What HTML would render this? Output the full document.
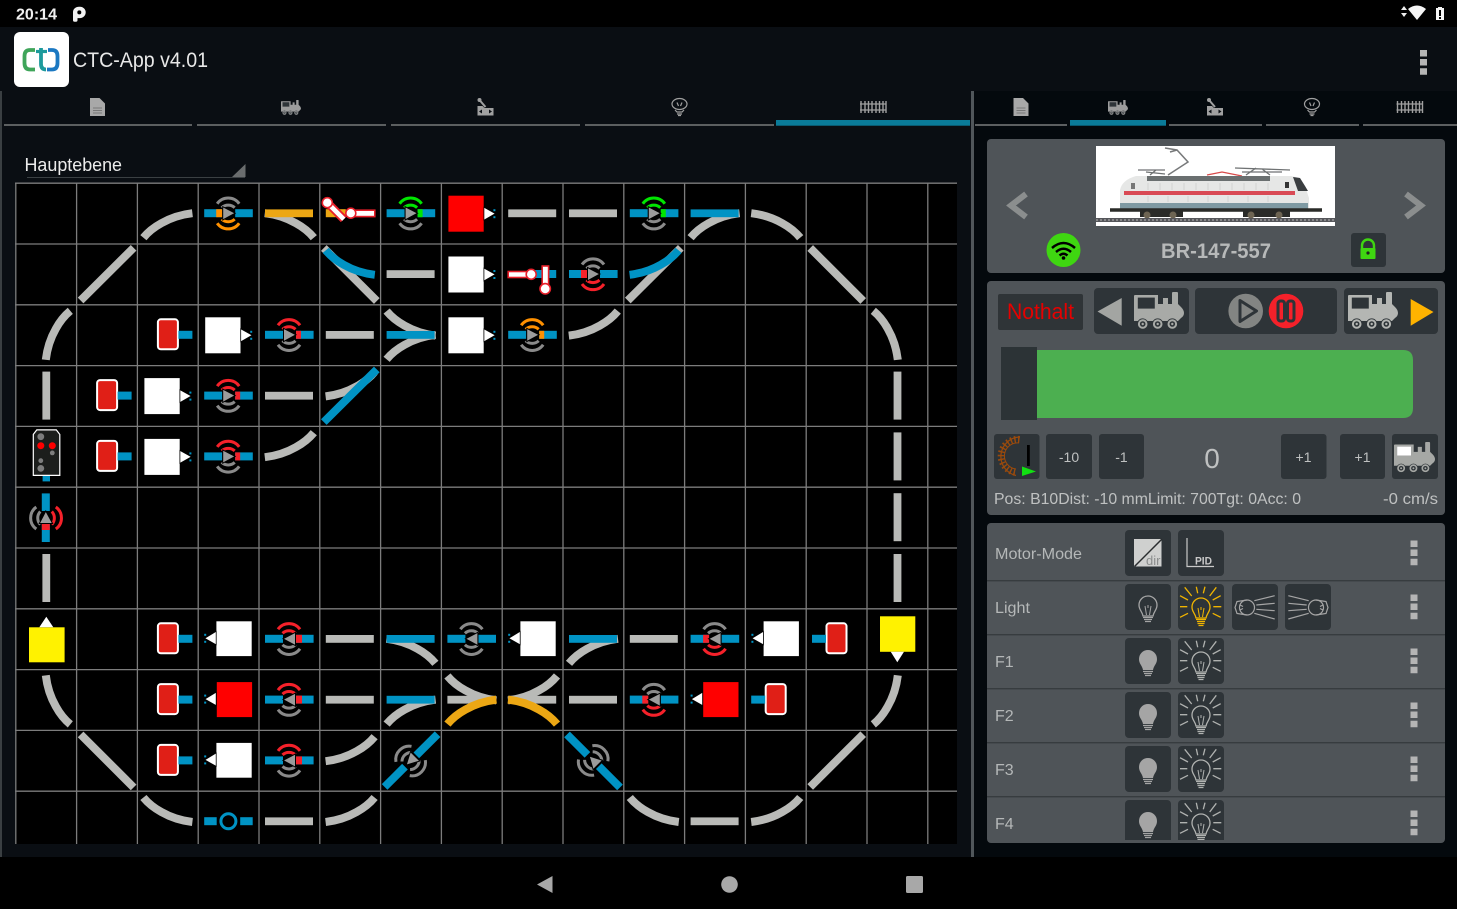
<!DOCTYPE html>
<html><head><meta charset="utf-8"><title>CTC-App</title>
<style>
html,body{margin:0;padding:0;background:#0a0e13;width:1457px;height:909px;overflow:hidden}
svg{display:block;position:absolute;left:0;top:0}
text{font-family:"Liberation Sans",sans-serif}
</style></head><body>
<svg width="1457" height="909" viewBox="0 0 1457 909" xmlns="http://www.w3.org/2000/svg">
<defs>
<!-- tracks -->
<rect id="h" x="6" y="26.2" width="48" height="7.8" fill="currentColor"/>
<rect id="v" x="26.6" y="6" width="7.8" height="48" fill="currentColor"/>
<path id="cES" d="M55 30Q38 32 24 40Q13 46 6 54.5" fill="none" stroke="currentColor" stroke-width="8"/>
<use id="cWS" href="#cES" transform="matrix(-1 0 0 1 60.8 0)"/>
<use id="cEN" href="#cES" transform="matrix(1 0 0 -1 0 60.8)"/>
<use id="cWN" href="#cES" transform="matrix(-1 0 0 -1 60.8 60.8)"/>
<use id="cSNE" href="#cES" transform="matrix(0 1 1 0 0 0)"/>
<use id="cSNW" href="#cES" transform="matrix(0 1 -1 0 60.8 0)"/>
<use id="cNSE" href="#cES" transform="matrix(0 -1 1 0 0 60.8)"/>
<use id="cNSW" href="#cES" transform="matrix(0 -1 -1 0 60.8 60.8)"/>
<path id="dU" d="M4 56.5L57 3.8" fill="none" stroke="currentColor" stroke-width="8"/>
<path id="dD" d="M4 4L57 57" fill="none" stroke="currentColor" stroke-width="8"/>
<!-- sensor parts -->
<g id="bl" fill="#0093c4"><rect x="6" y="26" width="18" height="8"/><rect x="37" y="26" width="17.6" height="8"/></g>
<polygon id="tR" points="24.5,23.5 37,30 24.5,36.8" fill="#9c9c9c" stroke="#000" stroke-width="1"/>
<polygon id="tL" points="36.5,23.5 24,30 36.5,36.8" fill="#9c9c9c" stroke="#000" stroke-width="1"/>
<g id="at" fill="none" stroke="currentColor" stroke-width="3"><path d="M19 20.5A13.500 13.500 0 0 1 41 20.5"/><path d="M23.500 24.500A9.500 9.500 0 0 1 36.500 24.500"/></g>
<g id="ab" fill="none" stroke="currentColor" stroke-width="3"><path d="M19 40A13.500 13.500 0 0 0 41 40"/><path d="M23.500 36A9.500 9.500 0 0 0 36.500 36"/></g>
<!-- composite sensors -->
<g id="sRedR"><use href="#at" color="#f5212a"/><use href="#ab" color="#8a8a8a"/><use href="#bl"/><rect x="37" y="26" width="5" height="8" fill="#f5212a"/><use href="#tR"/></g>
<g id="sOrgL"><use href="#at" color="#8a8a8a"/><use href="#ab" color="#ff9000"/><use href="#bl"/><rect x="18" y="26" width="6" height="8" fill="#ff9000"/><use href="#tR"/></g>
<g id="sOrgR"><use href="#at" color="#ff9000"/><use href="#ab" color="#8a8a8a"/><use href="#bl"/><rect x="37" y="26" width="5" height="8" fill="#ff9000"/><use href="#tR"/></g>
<g id="sGrn"><use href="#at" color="#00e600"/><use href="#ab" color="#8a8a8a"/><use href="#bl"/><rect x="37" y="26" width="5" height="8" fill="#00e600"/><use href="#tR"/></g>
<g id="sRedB"><use href="#at" color="#8a8a8a"/><use href="#ab" color="#f5212a"/><use href="#bl"/><rect x="18" y="26" width="6" height="8" fill="#f5212a"/><use href="#tR"/></g>
<g id="lRedR"><use href="#at" color="#f5212a"/><use href="#ab" color="#8a8a8a"/><use href="#bl"/><rect x="37" y="26" width="6" height="8" fill="#f5212a"/><use href="#tL"/></g>
<g id="lRedB"><use href="#at" color="#8a8a8a"/><use href="#ab" color="#f5212a"/><use href="#bl"/><rect x="18.5" y="26" width="6" height="8" fill="#f5212a"/><use href="#tL"/></g>
<g id="lGray"><use href="#at" color="#8a8a8a"/><use href="#ab" color="#8a8a8a"/><use href="#bl"/><use href="#tL"/></g>
<!-- markers & blocks -->
<g id="mk"><rect x="20.5" y="14.5" width="20" height="30" rx="3" fill="#e01f17" stroke="#fff" stroke-width="2"/><rect x="41" y="26" width="14" height="8" fill="#0093c4"/></g>
<use id="mkL" href="#mk" transform="matrix(-1 0 0 1 60.8 0)"/>
<g id="arrR"><rect x="52" y="26" width="2" height="2" fill="#0093c4"/><rect x="52" y="33" width="2" height="2" fill="#0093c4"/><polygon points="42.5,24 54,30.4 42.5,37" fill="#fff" stroke="#000" stroke-width=".8"/></g>
<g id="arrL"><rect x="6" y="25" width="2" height="2" fill="#0093c4"/><rect x="6" y="32" width="2" height="2" fill="#0093c4"/><polygon points="18,22.5 6.5,29.5 18,36" fill="#fff" stroke="#000" stroke-width=".8"/></g>
<g id="bWR"><rect x="7" y="12.5" width="35.3" height="36" fill="#fff"/><use href="#arrR"/></g>
<g id="bRR"><rect x="7" y="12.5" width="35.3" height="36" fill="#f00"/><use href="#arrR"/></g>
<g id="bWL"><rect x="18.2" y="12.5" width="35.3" height="34.8" fill="#fff"/><use href="#arrL"/></g>
<g id="bRL"><rect x="18.6" y="12.5" width="35.3" height="35" fill="#f00"/><use href="#arrL"/></g>
<!-- loco -->
<g id="loco"><path fill="currentColor" d="M0 4Q0 3 1 3H24V12H29V6H34V12H38V1Q38 0 39 0H43Q44 0 44 1V12L47 15Q50 18 50 21Q50 24 47 26L44 29H0Z"/><rect x="3.800" y="5.600" width="17" height="11" fill="#2e3438"/><g fill="currentColor" stroke="#2e3438" stroke-width=".8"><circle cx="8.700" cy="32" r="5.200"/><circle cx="23.700" cy="32" r="5.200"/><circle cx="38.300" cy="32" r="5.200"/></g><g fill="#2e3438"><circle cx="8.700" cy="32" r="2.800"/><circle cx="23.700" cy="32" r="2.800"/><circle cx="38.300" cy="32" r="2.800"/></g><g fill="currentColor"><circle cx="8.700" cy="32" r="1.200"/><circle cx="23.700" cy="32" r="1.200"/><circle cx="38.300" cy="32" r="1.200"/></g></g>
<g id="docT"><path d="M-7.500 -9H2L7.500 -3.500V9H-7.500Z" fill="#a8a8a8"/><path d="M-4.500 1H4.500M-4.500 3.500H4.500M-4.500 6H4.500" stroke="#777" stroke-width="1"/></g>
<g id="levT"><path d="M-8 -1H-3L-1 1H8V8.500H-8Z" fill="#a0a0a0"/><path d="M-6 -7L0 0" stroke="#a0a0a0" stroke-width="2"/><circle cx="-6" cy="-7" r="2" fill="#a0a0a0"/><path d="M-6.500 4.500L-3.500 2.500V6.500ZM6.500 4.500L3.500 2.500V6.500Z" fill="#0a0e13"/></g>
<g id="blbT" fill="none" stroke="#a0a0a0" stroke-width="1.200"><ellipse cx="0" cy="-3" rx="7.500" ry="5.500"/><path d="M-4.500 3L-2.500 5H2.500L4.500 3M-2.500 7H2.500M-1.500 8.500H1.500"/><path d="M-2.500 -4.500L-1 -1M2.500 -4.500L1 -1"/></g>
<g id="trkT" stroke="#a0a0a0" fill="none"><path d="M-13 -3H13M-13 3H13" stroke-width="1.200"/><path d="M-12 -6V6M-8 -6V6M-4.500 -6V6M-1 -6V6M3 -6V6M6.500 -6V6M10 -6V6M13 -6V6" stroke-width="1.400"/></g>
<!-- bulbs (button-local 46x46) -->
<g id="bulbO"><path d="M18 32C17 27 14 26 14 21A9 9 0 0 1 32 21C32 26 29 27 28 32Z" fill="none" stroke="#a5a5a5" stroke-width="1.300"/><path d="M20 22L21.500 31M26 22L24.500 31M23 21V24" stroke="#a5a5a5" stroke-width="1" fill="none"/><path d="M18 33.500H28M19 35.500H27M20 37.500H26" stroke="#a5a5a5" stroke-width="1.200"/></g>
<g id="bulbF"><path d="M18 32C17 27 14 26 14 21A9 9 0 0 1 32 21C32 26 29 27 28 32Z" fill="#a5a5a5"/><path d="M18 33.500H28M19 35.500H27M20 37.500H26" stroke="#a5a5a5" stroke-width="1.200"/></g>
<g id="bulbR" fill="none" stroke="currentColor"><path stroke-width="1.300" d="M18 34C17 29 14 28 14 23A9 9 0 0 1 32 23C32 28 29 29 28 34Z"/><path stroke-width="1" d="M20 24L21.500 33M26 24L24.500 33M23 23V26"/><path stroke-width="1.200" d="M18 35.500H28M19 37.500H27M19.500 39.500H26.500M20.500 41.500H25.500"/><path stroke-width="1.300" d="M6.700 3.300L13.700 12M18.300 2.700L19.700 9.300M27 2.700L25.300 9.300M38.300 3.300L31.700 12M2 11.700L10 16M42.700 11.700L34.700 16M2 22.700H9.300M43.300 22.700H35.300M2 33.300L10 29.300M42.700 33.300L34.700 29.300"/></g>
<g id="lamp" fill="none" stroke="#a5a5a5" stroke-width="1.200"><circle cx="15" cy="23.500" r="7.500"/><path d="M15 16L5 17.500L3 23.500L5 29.500L15 31M8 21L11 22.500M8 26L11 24.500M22.300 16.700L42.700 11.700M24.300 21L42.700 19.300M24.300 25.300L42.700 26.700M22.300 29.300L42.700 35"/></g>
<path id="dots" d="M0 0h7v6.500h-7zM0 9h7v6.500h-7zM0 18.300h7v6.500h-7z" fill="#b5b5b5"/>
<clipPath id="cardClip"><rect x="987" y="523" width="458" height="317"/></clipPath>
<clipPath id="imgClip"><rect x="1096" y="146" width="239" height="80"/></clipPath>
</defs>

<!-- backgrounds -->
<rect width="1457" height="909" fill="#0a0e13"/>
<rect x="974" y="91" width="483" height="766" fill="#04090d"/>
<rect x="0" y="0" width="1457" height="27" fill="#000"/>
<rect x="0" y="857" width="1457" height="52" fill="#000"/>
<rect x="0" y="91" width="2" height="766" fill="#3a3f42"/>
<rect x="971" y="91" width="3" height="766" fill="#50565a"/>

<!-- status bar -->
<text x="16" y="19.500" font-size="15.500" font-weight="bold" fill="#f0f0f0" textLength="41" lengthAdjust="spacingAndGlyphs">20:14</text>
<path d="M73 12a6 5.300 0 0 1 6-5.300h1a5.700 5.700 0 0 1 0 11.400h-2.500v2a1.600 1.600 0 0 1-1.600 1.600h-1.300a1.600 1.600 0 0 1-1.600-1.600Z" fill="#f2f2f2"/><circle cx="79.300" cy="12.400" r="2" fill="#000"/>
<path d="M1404 6l3 4h-6ZM1404 17l-3-4h6Z" fill="#eee"/>
<path d="M1408 9Q1417 2 1426 9L1417 20Z" fill="#f5f5f5"/>
<path d="M1436 8h2v-1h4v1h2v12h-8Z" fill="#f5f5f5"/><rect x="1439" y="10" width="2" height="6" fill="#000"/><rect x="1439" y="17" width="2" height="2" fill="#000"/>

<!-- toolbar -->
<rect x="14" y="32" width="55" height="55" rx="6" fill="#fff"/>
<path d="M35 50H30Q24.500 50 24.500 56V63Q24.500 69.500 30 69.500H35" fill="none" stroke="#3fa55a" stroke-width="3.800"/>
<path d="M41 48V64Q41 69.500 46 69.500" fill="none" stroke="#1d9a9c" stroke-width="3.800"/>
<path d="M36 51.500H47" stroke="#1d9a9c" stroke-width="3.200"/>
<path d="M48 50H52Q57.500 50 57.500 56V63Q57.500 69.500 52 69.500H47" fill="none" stroke="#1b78c2" stroke-width="3.800"/>
<text x="73" y="67" font-size="21.500" fill="#e8e8e8" textLength="135" lengthAdjust="spacingAndGlyphs">CTC-App v4.01</text>
<use href="#dots" transform="translate(1420 50)"/>

<!-- left tabs -->
<g fill="#5c5f60">
<rect x="4" y="124" width="188" height="2"/><rect x="197" y="124" width="189" height="2"/><rect x="391" y="124" width="189" height="2"/><rect x="585" y="124" width="189" height="2"/>
</g>
<rect x="776" y="120" width="194" height="5.700" fill="#0a7b99"/>
<use href="#docT" x="97.500" y="107"/><use href="#loco" transform="translate(281 100) scale(.4)" color="#9c9c9c"/><use href="#levT" x="485.500" y="107"/><use href="#blbT" x="679.500" y="107"/><use href="#trkT" x="873" y="107"/>
<!-- right tabs -->
<g fill="#5c5f60">
<rect x="975" y="124" width="92" height="2"/><rect x="1169" y="124" width="93" height="2"/><rect x="1266" y="124" width="93" height="2"/><rect x="1363" y="124" width="94" height="2"/>
</g>
<rect x="1070" y="120" width="96" height="5.700" fill="#0a7b99"/>
<use href="#docT" x="1021" y="107"/><use href="#loco" transform="translate(1108 100) scale(.4)" color="#9c9c9c"/><use href="#levT" x="1215" y="107"/><use href="#blbT" x="1312" y="107"/><use href="#trkT" x="1409.500" y="107"/>

<!-- dropdown -->
<text x="24.500" y="171" font-size="18" fill="#ececec" textLength="97.500" lengthAdjust="spacingAndGlyphs">Hauptebene</text>
<rect x="27" y="177" width="218" height="1" fill="#3b4043"/>
<polygon points="232,177 245.500,177 245.500,164" fill="#6a6d6e"/>

<!-- plan -->
<rect x="16" y="183" width="941" height="661" fill="#000"/>
<g stroke="#7c7c7c" stroke-width="1.300">
<path d="M15.800 183V844M76.600 183V844M137.400 183V844M198.200 183V844M259 183V844M319.800 183V844M380.600 183V844M441.400 183V844M502.200 183V844M563 183V844M623.800 183V844M684.600 183V844M745.400 183V844M806.200 183V844M867 183V844M927.800 183V844"/>
<path d="M15 183.200H957M15 244H957M15 304.800H957M15 365.600H957M15 426.400H957M15 487.200H957M15 548H957M15 608.800H957M15 669.600H957M15 730.400H957M15 791.200H957"/>
</g>
<g color="#b9bab7">
<!-- row 0 -->
<g transform="translate(0 183.200)">
<use href="#cES" x="0" transform="translate(137.400 0)"/>
<use href="#sOrgL" x="198.200"/>
<use href="#cWS" transform="translate(259 0)"/><use href="#h" x="259" color="#eca714"/>
<g transform="translate(319.800 0)"><rect x="6" y="26" width="20" height="8" fill="#eca714"/><path d="M8 20L24 36" stroke="#e8202a" stroke-width="8.400"/><path d="M8 20L24 36" stroke="#fff" stroke-width="4.600"/><circle cx="7.500" cy="19.500" r="5" fill="#fff" stroke="#e8202a" stroke-width="1.600"/><rect x="31" y="27" width="24" height="6.400" fill="#fff" stroke="#e8202a" stroke-width="1.600"/><circle cx="31" cy="30" r="5" fill="#fff" stroke="#e8202a" stroke-width="1.600"/></g>
<use href="#sGrn" x="380.600"/>
<use href="#bRR" x="441.400"/>
<use href="#h" x="502.200"/><use href="#h" x="563"/>
<use href="#sGrn" x="623.800"/>
<use href="#cES" transform="translate(684.600 0)"/><use href="#h" x="684.600" color="#0093c4"/>
<use href="#cWS" transform="translate(745.400 0)"/>
</g>
<!-- row 1 -->
<g transform="translate(0 244)">
<use href="#dU" x="76.600"/>
<use href="#dD" transform="translate(319.800 0)"/><use href="#cEN" transform="translate(319.800 0)" color="#0093c4"/>
<use href="#h" x="380.600"/>
<use href="#bWR" x="441.400"/>
<g transform="translate(502.200 0)"><rect x="31" y="26" width="23" height="8" fill="#0093c4"/><rect x="6" y="27.500" width="23" height="6" fill="#fff" stroke="#e8202a" stroke-width="1.600"/><circle cx="29" cy="30.300" r="5" fill="#fff" stroke="#e8202a" stroke-width="1.600"/><rect x="40" y="22" width="6.400" height="22" fill="#fff" stroke="#e8202a" stroke-width="1.600"/><circle cx="43" cy="44.800" r="5.200" fill="#fff" stroke="#e8202a" stroke-width="1.600"/></g>
<use href="#sRedB" x="563"/>
<use href="#dU" x="623.800"/><use href="#cWN" transform="translate(623.800 0)" color="#0093c4"/>
<use href="#dD" x="806.200"/>
</g>
<!-- row 2 -->
<g transform="translate(0 304.800)">
<use href="#cSNE" transform="translate(15.800 0)"/>
<use href="#mk" x="137.400"/>
<use href="#bWR" x="198.200"/>
<use href="#sRedR" x="259"/>
<use href="#h" x="319.800"/>
<use href="#cES" transform="translate(380.600 0)"/>
<use href="#cEN" transform="translate(380.600 0)"/>
<use href="#h" x="380.600" color="#0093c4"/>
<use href="#bWR" x="441.400"/>
<use href="#sOrgR" x="502.200"/>
<use href="#cWN" transform="translate(563 0)"/>
<use href="#cSNW" transform="translate(867 0)"/>
</g>
<!-- row 3 -->
<g transform="translate(0 365.600)">
<use href="#v" x="15.800"/>
<use href="#mk" x="76.600"/>
<use href="#bWR" x="137.400"/>
<use href="#sRedR" x="198.200"/>
<use href="#h" x="259"/>
<use href="#cWN" transform="translate(319.800 0)"/><use href="#dU" x="319.800" color="#0093c4"/>
<use href="#v" x="867"/>
</g>
<!-- row 4 -->
<g transform="translate(0 426.400)">
<g transform="translate(15.800 0)"><rect x="26.800" y="49" width="7.400" height="6" fill="#0093c4"/><path d="M17.500 8L21 3.500H40.500L44 8V49H17.500Z" fill="#1c1e1c" stroke="#fff" stroke-width="1.200"/><circle cx="25" cy="10.300" r="3.400" fill="#7d7d7d"/><circle cx="25" cy="19.300" r="3.500" fill="#f00"/><circle cx="36.500" cy="19.300" r="3.500" fill="#f00"/><circle cx="36.500" cy="26.500" r="2.400" fill="#7d7d7d"/><circle cx="25" cy="34.300" r="2.400" fill="#7d7d7d"/><circle cx="25" cy="42" r="3.400" fill="#7d7d7d"/></g>
<use href="#mk" x="76.600"/>
<use href="#bWR" x="137.400"/>
<use href="#sRedR" x="198.200"/>
<use href="#cWN" transform="translate(259 0)"/>
<use href="#v" x="867"/>
</g>
<!-- row 5 -->
<g transform="translate(0 487.200)">
<g transform="translate(15.800 0) rotate(-90 30.400 30.400)"><use href="#sRedB"/></g>
<use href="#v" x="867"/>
</g>
<!-- row 6 -->
<g transform="translate(0 548)">
<use href="#v" x="15.800"/><use href="#v" x="867"/>
</g>
<!-- row 7 -->
<g transform="translate(0 608.800)">
<g transform="translate(15.800 0)"><rect x="13.200" y="18.500" width="35.600" height="35" fill="#fff200"/><polygon points="23.500,18.500 30.500,8 37.500,18.500" fill="#fff"/></g>
<use href="#mk" x="137.400"/>
<use href="#bWL" x="198.200"/>
<use href="#lRedR" x="259"/>
<use href="#h" x="319.800"/>
<use href="#cWS" transform="translate(380.600 0)"/><use href="#h" x="380.600" color="#0093c4"/>
<use href="#lGray" x="441.400"/>
<use href="#bWL" x="502.200"/>
<use href="#cES" transform="translate(563 0)"/><use href="#h" x="563" color="#0093c4"/>
<use href="#h" x="623.800"/>
<use href="#lRedB" x="684.600"/>
<use href="#bWL" x="745.400"/>
<use href="#mkL" x="806.200"/>
<g transform="translate(867 0)"><rect x="13" y="7.500" width="35.300" height="35.500" fill="#fff200"/><polygon points="23.700,43 37,43 30.300,53.500" fill="#fff"/></g>
</g>
<!-- row 8 -->
<g transform="translate(0 669.600)">
<use href="#cNSE" transform="translate(15.800 0)"/>
<use href="#mk" x="137.400"/>
<use href="#bRL" x="198.200"/>
<use href="#lRedR" x="259"/>
<use href="#h" x="319.800"/>
<use href="#cES" transform="translate(380.600 0)"/><use href="#h" x="380.600" color="#0093c4"/>
<use href="#h" x="441.400"/><use href="#cEN" transform="translate(441.400 0)"/><use href="#cES" transform="translate(441.400 0)" color="#eca714"/>
<use href="#h" x="502.200"/><use href="#cWN" transform="translate(502.200 0)"/><use href="#cWS" transform="translate(502.200 0)" color="#eca714"/>
<use href="#h" x="563"/>
<use href="#lRedB" x="623.800"/>
<use href="#bRL" x="684.600"/>
<use href="#mkL" x="745.400"/>
<use href="#cNSW" transform="translate(867 0)"/>
</g>
<!-- row 9 -->
<g transform="translate(0 730.400)">
<use href="#dD" x="76.600"/>
<use href="#mk" x="137.400"/>
<use href="#bWL" x="198.200"/>
<use href="#lRedR" x="259"/>
<use href="#cWN" transform="translate(319.800 0)"/>
<g transform="translate(380.600 0)"><use href="#dU" color="#0093c4"/><g transform="rotate(-45 30.400 30.400)"><rect x="22" y="24" width="16" height="13" fill="#000"/><use href="#at" color="#8a8a8a"/><use href="#ab" color="#8a8a8a"/><use href="#tL"/></g></g>
<g transform="translate(563 0)"><use href="#dD" color="#0093c4"/><g transform="rotate(45 30.400 30.400)"><rect x="22" y="24" width="16" height="13" fill="#000"/><use href="#at" color="#8a8a8a"/><use href="#ab" color="#8a8a8a"/><use href="#tL"/></g></g>
<use href="#dU" x="806.200"/>
</g>
<!-- row 10 -->
<g transform="translate(0 791.200)">
<use href="#cEN" transform="translate(137.400 0)"/>
<g transform="translate(198.200 0)"><rect x="6" y="26" width="12.500" height="8" fill="#0093c4"/><rect x="42" y="26" width="12.500" height="8" fill="#0093c4"/><circle cx="30.200" cy="30" r="7.500" fill="none" stroke="#0093c4" stroke-width="3"/></g>
<use href="#h" x="259"/>
<use href="#cWN" transform="translate(319.800 0)"/>
<use href="#cEN" transform="translate(623.800 0)"/>
<use href="#h" x="684.600"/>
<use href="#cWN" transform="translate(745.400 0)"/>
</g>
</g>

<!-- card 1 -->
<rect x="987" y="139" width="458" height="134" rx="4" fill="#4f5458"/>
<rect x="1096" y="146" width="239" height="80" fill="#fff"/>
<g clip-path="url(#imgClip)">
<path d="M1165 148L1177 150L1188 162L1168 175M1177 150L1170 152" fill="none" stroke="#77797a" stroke-width="1.500"/>
<path d="M1138 170H1165M1146 172L1165 174M1150 175L1156 170M1235 168L1290 170M1242 172H1282M1246 175L1256 168M1270 175L1262 169" fill="none" stroke="#6f7273" stroke-width="1.300"/>
<path d="M1207 175L1222 172L1242 176" fill="none" stroke="#d84a4a" stroke-width="1.200"/>
<path d="M1136 176H1291L1300 178L1305 186L1309 198V212H1120V190Q1122 180 1136 176Z" fill="#e6e7e6"/>
<rect x="1147" y="176" width="123" height="5" fill="#6a6f70"/>
<path d="M1293 177L1300 178L1305 186L1308 191H1298Z" fill="#3a3d40"/>
<rect x="1131" y="183" width="4" height="6" fill="#777"/><rect x="1285" y="182" width="4" height="6" fill="#333"/>
<rect x="1124" y="191" width="171" height="4" fill="#d94a55"/>
<path d="M1148 183V190M1160 183V190M1172 183V190M1184 183V190M1196 183V190M1208 183V190M1220 183V190M1232 183V190M1244 183V190M1256 183V190M1268 183V190M1148 196V202M1168 196V202M1188 196V202M1208 196V202M1228 196V202M1248 196V202M1268 196V202" stroke="#d2d3d2" stroke-width="1"/>
<rect x="1120" y="203" width="188" height="7" fill="#7f9aa3"/>
<path d="M1110 210H1322" stroke="#2a2b28" stroke-width="3.500"/>
<rect x="1140" y="210" width="43" height="7" fill="#2a2b28"/><rect x="1243" y="210" width="47" height="7" fill="#2a2b28"/>
<g fill="#6e6553"><circle cx="1147" cy="215" r="3.500"/><circle cx="1173" cy="215" r="3.500"/><circle cx="1251" cy="215" r="3.500"/><circle cx="1279" cy="215" r="3.500"/></g>
<rect x="1096" y="218" width="239" height="4" fill="#55565a"/>
<path d="M1096 220H1335" stroke="#bbb" stroke-width="1" stroke-dasharray="2 2"/>
</g>
<path d="M1026 194L1011 205.500L1026 217" fill="none" stroke="#8b8e8e" stroke-width="6"/>
<path d="M1406 194L1421 205.500L1406 217" fill="none" stroke="#8b8e8e" stroke-width="6"/>
<circle cx="1063.500" cy="250" r="17" fill="#3fd611"/>
<g fill="none" stroke="#000" stroke-width="2.500"><path d="M1052 248Q1063.500 238 1075 248"/><path d="M1056 252Q1063.500 245.500 1071 252"/><path d="M1059.500 255.500Q1063.500 252 1067.500 255.500"/></g><circle cx="1063.500" cy="258" r="1.800" fill="#000"/>
<text x="1216" y="258" font-size="21" font-weight="bold" fill="#b7b9b9" text-anchor="middle" textLength="110" lengthAdjust="spacingAndGlyphs">BR-147-557</text>
<rect x="1351" y="233" width="35" height="34" rx="3" fill="#2e3438"/>
<path d="M1362 248.500V245.500a6 6 0 0 1 12 0V248.500" fill="none" stroke="#3fd611" stroke-width="2.400"/><rect x="1360.500" y="248" width="15" height="11" rx="1" fill="#3fd611"/><circle cx="1368" cy="253" r="1.600" fill="#222"/>

<!-- card 2 -->
<rect x="987" y="281" width="458" height="234" rx="4" fill="#4f5458"/>
<rect x="998" y="294" width="85" height="36" rx="2" fill="#2f3437"/>
<text x="1007" y="319" font-size="22" fill="#e60000" textLength="67" lengthAdjust="spacingAndGlyphs">Nothalt</text>
<rect x="1094" y="288" width="95" height="46" rx="4" fill="#2e3438"/>
<rect x="1195" y="288" width="142" height="46" rx="4" fill="#2e3438"/>
<rect x="1344" y="288" width="94" height="46" rx="4" fill="#2e3438"/>
<polygon points="1097.500,311.500 1121.700,298 1121.700,325.700" fill="#a3a5a2"/>
<use href="#loco" x="1134" y="292" color="#a8aaa7"/>
<circle cx="1245.700" cy="311" r="17.300" fill="#838583"/><polygon points="1240,300.500 1256.500,311 1240,321.500" fill="none" stroke="#2e3438" stroke-width="3" stroke-linejoin="round"/>
<circle cx="1286" cy="311" r="17.300" fill="#f5212a"/><g fill="none" stroke="#2e3438" stroke-width="3"><rect x="1278" y="301" width="6.500" height="20" rx="2.500"/><rect x="1287.500" y="301" width="6.500" height="20" rx="2.500"/></g>
<use href="#loco" x="1348" y="292" color="#b4b6b3"/>
<polygon points="1410.700,299 1433.500,312 1410.700,325.700" fill="#ffb300"/>
<rect x="1001" y="347" width="36" height="73" fill="#2c3336"/>
<path d="M1037 350H1403Q1413 350 1413 360V408Q1413 418 1403 418H1037Z" fill="#4caf50"/>
<g fill="#2e3438">
<rect x="994" y="434" width="45.500" height="45" rx="3"/><rect x="1046" y="434" width="46" height="45" rx="3"/><rect x="1099" y="434" width="45" height="45" rx="3"/><rect x="1281" y="434" width="45.500" height="45" rx="3"/><rect x="1340" y="434" width="45" height="45" rx="3"/><rect x="1392" y="434" width="46" height="45" rx="3"/>
</g>
<path d="M1019.500 439.500A16.500 16.500 0 0 0 1016 472.400" fill="none" stroke="#9a4a0c" stroke-width="7" stroke-dasharray="1.500 2.300"/>
<path d="M1019 443A13 13 0 0 0 1016 469" fill="none" stroke="#9a4a0c" stroke-width="1"/>
<path d="M1020 437A19.500 19.500 0 0 0 1016 475.500" fill="none" stroke="#9a4a0c" stroke-width="1.200"/>
<rect x="1027" y="445" width="2.800" height="21" fill="#000"/>
<polygon points="1022,466.500 1036,471.500 1022,476" fill="#12e012"/>
<g fill="#bfc1c1" font-size="14" text-anchor="middle">
<text x="1069" y="462">-10</text><text x="1121.500" y="462">-1</text><text x="1303.500" y="462">+1</text><text x="1362.500" y="462">+1</text>
</g>
<text x="1212" y="468" font-size="28" fill="#bfc1c1" text-anchor="middle">0</text>
<g transform="translate(1394 442) scale(.82)"><use href="#loco" color="#a6a8a5"/><rect x="3.800" y="5.600" width="17" height="11" fill="#fff"/></g>
<text x="994" y="504" font-size="16" fill="#bfc1c1" textLength="307" lengthAdjust="spacingAndGlyphs">Pos: B10Dist: -10 mmLimit: 700Tgt: 0Acc: 0</text>
<text x="1383" y="504" font-size="16" fill="#bfc1c1" textLength="55" lengthAdjust="spacingAndGlyphs">-0 cm/s</text>

<!-- card 3 -->
<rect x="987" y="523" width="458" height="320" rx="4" fill="#4f5458"/>
<g fill="#373c3f"><rect x="987" y="580" width="458" height="1.400"/><rect x="987" y="634" width="458" height="1.400"/><rect x="987" y="688" width="458" height="1.400"/><rect x="987" y="742" width="458" height="1.400"/><rect x="987" y="796" width="458" height="1.400"/></g>
<g fill="#b5b8b8" font-size="16">
<text x="995" y="559" textLength="87" lengthAdjust="spacingAndGlyphs">Motor-Mode</text>
<text x="995" y="613" textLength="35" lengthAdjust="spacingAndGlyphs">Light</text>
<text x="995" y="667">F1</text><text x="995" y="721">F2</text><text x="995" y="775">F3</text><text x="995" y="829">F4</text>
</g>
<g clip-path="url(#cardClip)">
<g fill="#2e3438">
<rect x="1125" y="530" width="46" height="46" rx="4"/><rect x="1178" y="530" width="46" height="46" rx="4"/>
<rect x="1125" y="584" width="46" height="46" rx="4"/><rect x="1178" y="584" width="46" height="46" rx="4"/><rect x="1232" y="584" width="46" height="46" rx="4"/><rect x="1285" y="584" width="46" height="46" rx="4"/>
<rect x="1125" y="638" width="46" height="46" rx="4"/><rect x="1178" y="638" width="46" height="46" rx="4"/>
<rect x="1125" y="692" width="46" height="46" rx="4"/><rect x="1178" y="692" width="46" height="46" rx="4"/>
<rect x="1125" y="746" width="46" height="46" rx="4"/><rect x="1178" y="746" width="46" height="46" rx="4"/>
<rect x="1125" y="800" width="46" height="46" rx="4"/><rect x="1178" y="800" width="46" height="46" rx="4"/>
</g>
<rect x="1134" y="539" width="27.500" height="27.500" fill="#cfd0cf"/>
<path d="M1134.500 566.500L1162 539" stroke="#2a2d2f" stroke-width="1.500"/>
<text x="1146" y="565" font-size="13" fill="#8b8d8d">dir</text>
<path d="M1187 538V566.500H1214" fill="none" stroke="#c9c9c9" stroke-width="1.200"/>
<text x="1195" y="564.500" font-size="11" font-weight="bold" fill="#c9c9c9" textLength="17" lengthAdjust="spacingAndGlyphs">PID</text>
<use href="#bulbO" x="1125" y="584"/>
<use href="#bulbR" x="1178" y="584" color="#f0b400"/>
<use href="#lamp" x="1232" y="584"/>
<use href="#lamp" transform="matrix(-1 0 0 1 1331 584)"/>
<use href="#bulbF" x="1125" y="638"/><use href="#bulbR" x="1178" y="638" color="#b0b2b0"/>
<use href="#bulbF" x="1125" y="692"/><use href="#bulbR" x="1178" y="692" color="#b0b2b0"/>
<use href="#bulbF" x="1125" y="746"/><use href="#bulbR" x="1178" y="746" color="#b0b2b0"/>
<use href="#bulbF" x="1125" y="800"/><use href="#bulbR" x="1178" y="800" color="#b0b2b0"/>
</g>
<use href="#dots" x="1410.500" y="540.500"/><use href="#dots" x="1410.500" y="594.500"/><use href="#dots" x="1410.500" y="648.500"/><use href="#dots" x="1410.500" y="702.500"/><use href="#dots" x="1410.500" y="756.500"/><use href="#dots" x="1410.500" y="810.500"/>

<!-- nav bar -->
<polygon points="537,884.500 552.500,876 552.500,893" fill="#a8a8a8"/>
<circle cx="729.500" cy="884.500" r="8.300" fill="#a8a8a8"/>
<rect x="906" y="876" width="17" height="17" rx="1.500" fill="#a8a8a8"/>
</svg>
</body></html>
